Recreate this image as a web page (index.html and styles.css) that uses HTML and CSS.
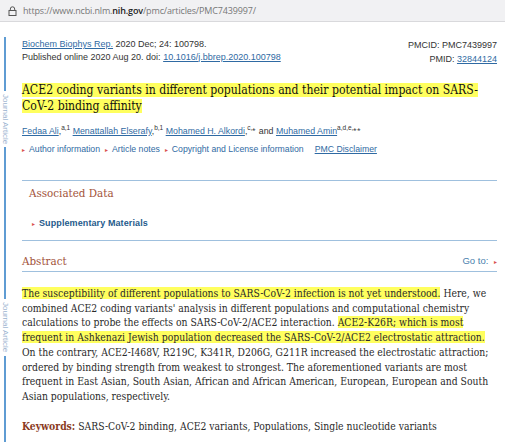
FILE: index.html
```html
<!DOCTYPE html>
<html>
<head>
<meta charset="utf-8">
<link rel="stylesheet" href="styles.css">
</head>
<body>
<div class="urlbar">
  <svg class="lock" width="9" height="10" viewBox="0 0 9 10"><path d="M2.3 4.5V3a2.2 2.2 0 0 1 4.4 0v1.5" fill="none" stroke="#555" stroke-width="1"/><rect x="1" y="4.5" width="7" height="5" fill="none" stroke="#555" stroke-width="1"/></svg>
  <span class="url">https://www.ncbi.nlm.<b>nih.gov</b>/pmc/articles/PMC7439997/</span>
</div>
<div class="page">
  <div class="rail">
    <div class="seg s1"></div>
    <div class="vlabel">Journal Article</div>
    <div class="seg s2"></div>
    <div class="vlabel">Journal Article</div>
    <div class="seg s3"></div>
  </div>
  <div class="content">
    <div class="cite">
      <div class="cite-left">
        <div><a href="#">Biochem Biophys Rep.</a> 2020 Dec; 24: 100798.</div>
        <div>Published online 2020 Aug 20. doi: <a href="#">10.1016/j.bbrep.2020.100798</a></div>
      </div>
      <div class="cite-right">
        <div>PMCID: PMC7439997</div>
        <div>PMID: <a href="#">32844124</a></div>
      </div>
    </div>
    <h1 class="title"><span class="hl">ACE2 coding variants in different populations and their potential impact on SARS-CoV-2 binding affinity</span></h1>
    <div class="authors"><a href="#">Fedaa Ali</a>,<sup>a,1</sup> <a href="#">Menattallah Elserafy</a>,<sup>b,1</sup> <a href="#">Mohamed H. Alkordi</a>,<sup>c,⁎</sup> and <a href="#">Muhamed Amin</a><sup>a,d,e,⁎⁎</sup></div>
    <div class="navlinks">
      <span class="bul">▸</span><span class="nl">Author information</span>
      <span class="bul">▸</span><span class="nl">Article notes</span>
      <span class="bul">▸</span><span class="nl">Copyright and License information</span>
      <a href="#" class="disc">PMC Disclaimer</a>
    </div>
    <div class="assoc">
      <h2 class="assoc-h">Associated Data</h2>
      <div class="supp"><span class="bul">▸</span><span class="supp-t">Supplementary Materials</span></div>
    </div>
    <div class="abs-head">
      <h2 class="abs-h">Abstract</h2>
      <span class="goto">Go to: <span class="bul">▸</span></span>
    </div>
    <p class="abs"><span class="hl">The susceptibility of different populations to SARS-CoV-2 infection is not yet understood.</span> Here, we combined ACE2 coding variants' analysis in different populations and computational chemistry calculations to probe the effects on SARS-CoV-2/ACE2 interaction. <span class="hl">ACE2-K26R; which is most frequent in Ashkenazi Jewish population decreased the SARS-CoV-2/ACE2 electrostatic attraction.</span> On the contrary, ACE2-I468V, R219C, K341R, D206G, G211R increased the electrostatic attraction; ordered by binding strength from weakest to strongest. The aforementioned variants are most frequent in East Asian, South Asian, African and African American, European, European and South Asian populations, respectively.</p>
    <p class="kw"><b>Keywords:</b> SARS-CoV-2 binding, ACE2 variants, Populations, Single nucleotide variants</p>
  </div>
</div>
</body>
</html>
```
FILE: styles.css
```css
* { box-sizing: border-box; }
html, body { margin: 0; padding: 0; background: #fff; }
body { width: 505px; height: 442px; overflow: hidden; font-family: "Liberation Sans", Arial, sans-serif; color: #333; }
a { color: #2f6aa3; text-decoration: underline; }
.urlbar { height: 22px; background: #f1f1f3; border-bottom: 1px solid #d9d9dc; display: flex; align-items: center; padding-left: 8px; gap: 6px; }
.lock { display: block; }
.url { font-family: "Open Sans", sans-serif; font-size: 9px; color: #777; letter-spacing: -0.15px; }
.url b { color: #222; font-weight: 600; }
.page { display: flex; padding-top: 15px; }
.rail { width: 10px; display: flex; flex-direction: column; align-items: center; flex: none; height: 405px; }
.seg { width: 2px; background: #5f9cd3; }
.s1 { height: 54px; }
.s2 { height: 152px; }
.s3 { flex: 1; }
.vlabel { writing-mode: vertical-rl; font-size: 8px; color: #9ab3cf; padding: 3px 0; line-height: 9px; }
.content { flex: 1; margin-left: 12px; margin-right: 8px; }
.cite { display: flex; justify-content: space-between; font-size: 9px; padding-top: 1px; }
.cite-left div { line-height: 12.5px; }
.cite-right { text-align: right; }
.cite-right div { line-height: 14px; }
.title { font-family: "DejaVu Serif Condensed", "DejaVu Serif", serif; font-weight: normal; font-size: 12.1px; line-height: 16px; margin: 16px 0 0; color: #111; }
.hl { background: #ffff5e; }
.authors { font-size: 8.8px; margin-top: 12px; }
.authors sup { font-size: 6.5px; line-height: 0; }
.navlinks { font-size: 8.7px; margin-top: 8px; display: flex; align-items: center; }
.bul { color: #d9534f; font-size: 6px; margin-right: 4px; }
.nl { color: #2f6aa3; margin-right: 5px; }
.disc { margin-left: 6px; }
.assoc { border-top: 1px solid #9fc0de; border-bottom: 1px solid #9fc0de; margin-top: 26px; padding: 4px 7px 12px; }
.assoc-h { font-family: "DejaVu Serif Condensed", "DejaVu Serif", serif; font-weight: normal; font-size: 11.5px; color: #a2533a; margin: 0; line-height: 16px; }
.supp { margin-top: 17px; font-size: 9px; padding-left: 3px; display: flex; align-items: center; }
.supp-t { font-weight: bold; color: #1f5b8c; letter-spacing: 0.1px; }
.abs-head { display: flex; justify-content: space-between; align-items: flex-end; border-bottom: 1px solid #9fc0de; margin-top: 12px; padding-bottom: 2px; }
.abs-h { font-family: "DejaVu Serif Condensed", "DejaVu Serif", serif; font-weight: normal; font-size: 11.5px; color: #a2533a; margin: 0; line-height: 16px; }
.goto { font-size: 9.5px; color: #4a7fae; padding-bottom: 3px; }
.goto .bul { margin: 0 0 0 3px; }
.abs { font-family: "DejaVu Serif Condensed", "DejaVu Serif", serif; font-size: 10.3px; line-height: 14.7px; margin: 14px 0 0; color: #2a2a2a; }
.kw { font-family: "DejaVu Serif Condensed", "DejaVu Serif", serif; font-size: 10.3px; line-height: 14.7px; margin: 15px 0 0; color: #2a2a2a; }
.kw b { color: #8a3b1e; }
```
